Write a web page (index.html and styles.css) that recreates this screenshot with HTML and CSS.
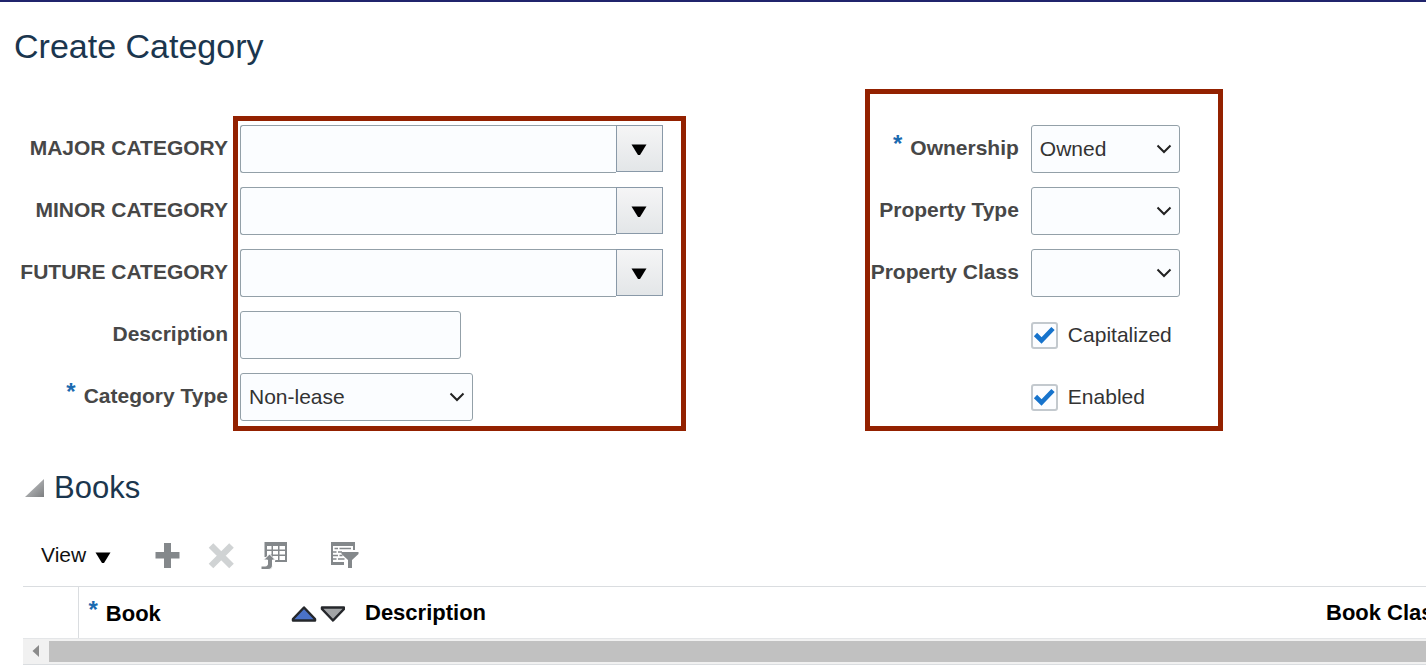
FILE: index.html
```
<!DOCTYPE html>
<html lang="en">
<head>
<meta charset="UTF-8">
<meta name="viewport" content="width=device-width, initial-scale=1">
<title>Create Category</title>
<link rel="stylesheet" href="styles.css">
</head>
<body>

<!-- shared icons -->
<svg class="sprite" aria-hidden="true">
  <symbol id="chevron" viewBox="0 0 16 10">
    <path d="M1.5 1.5 L8 8 L14.5 1.5" fill="none" stroke="#222" stroke-width="2"/>
  </symbol>
  <symbol id="caret" viewBox="0 0 16 12">
    <path d="M0.5 0.5 H15.5 L9 11 H7 Z" fill="#000"/>
  </symbol>
  <symbol id="check" viewBox="0 0 27 27">
    <path d="M4.5 12.5 L10.5 18.5 L22 6.5" fill="none" stroke="#1673cc" stroke-width="4.6"/>
  </symbol>
</svg>

<h1>Create Category</h1>

<form class="category-form">
  <div class="form-col form-left">
    <label for="major">MAJOR CATEGORY</label>
    <div class="combo">
      <input type="text" id="major">
      <button type="button" aria-label="Search major category"><svg><use href="#caret"/></svg></button>
    </div>

    <label for="minor">MINOR CATEGORY</label>
    <div class="combo">
      <input type="text" id="minor">
      <button type="button" aria-label="Search minor category"><svg><use href="#caret"/></svg></button>
    </div>

    <label for="future">FUTURE CATEGORY</label>
    <div class="combo">
      <input type="text" id="future">
      <button type="button" aria-label="Search future category"><svg><use href="#caret"/></svg></button>
    </div>

    <label for="description">Description</label>
    <input type="text" id="description" class="description">

    <label for="type"><span class="required">*</span>Category Type</label>
    <div class="select select-wide">
      <select id="type">
        <option>Non-lease</option>
        <option>Lease</option>
      </select>
      <svg><use href="#chevron"/></svg>
    </div>

    <div class="frame"></div>
  </div>

  <div class="form-col form-right">
    <label for="ownership"><span class="required">*</span>Ownership</label>
    <div class="select">
      <select id="ownership">
        <option>Owned</option>
        <option>Leased</option>
      </select>
      <svg><use href="#chevron"/></svg>
    </div>

    <label for="property-type">Property Type</label>
    <div class="select">
      <select id="property-type"><option></option></select>
      <svg><use href="#chevron"/></svg>
    </div>

    <label for="property-class">Property Class</label>
    <div class="select">
      <select id="property-class"><option></option></select>
      <svg><use href="#chevron"/></svg>
    </div>

    <div class="check">
      <span class="tick"><input type="checkbox" id="capitalized" checked><svg><use href="#check"/></svg></span>
      <label for="capitalized">Capitalized</label>
    </div>

    <div class="check">
      <span class="tick"><input type="checkbox" id="enabled" checked><svg><use href="#check"/></svg></span>
      <label for="enabled">Enabled</label>
    </div>

    <div class="frame"></div>
  </div>
</form>

<section class="books">
  <h2>
    <svg class="disclosure" viewBox="0 0 19 19" aria-hidden="true">
      <defs>
        <linearGradient id="fade" x1="0" y1="0" x2="1" y2="1">
          <stop offset="0.3" stop-color="#b4b6b8"/>
          <stop offset="1" stop-color="#7c7e80"/>
        </linearGradient>
      </defs>
      <path d="M19 0 V18 H0 Z" fill="url(#fade)"/>
    </svg>
    Books
  </h2>

  <div class="toolbar">
    <button type="button" class="view">View <svg><use href="#caret"/></svg></button>
    <button type="button" class="icon" aria-label="Add row">
      <svg viewBox="0 0 28 30"><path d="M11 3 h7 v9 h8.500 v6.500 h-8.500 v9.500 h-7 v-9.500 h-8.500 v-6.500 h8.500 Z" fill="#84888b"/></svg>
    </button>
    <button type="button" class="icon" aria-label="Delete row" disabled>
      <svg viewBox="0 0 28 30"><path d="M4 5.500 L24.500 26 M24.500 5.500 L4 26" stroke="#d0d3d4" stroke-width="6.500"/></svg>
    </button>
    <button type="button" class="icon" aria-label="Detach">
      <svg viewBox="0 0 28 30">
        <path d="M3.500 2 H26 V22 H14 V19.500 H9.500 V13 L6 13 V17 H3.500 Z" fill="#84888b"/>
        <path d="M6 6 h4.500 v3.500 h-4.500 Z M12 6 h5 v3.500 h-5 Z M18.500 6 h5.500 v3.500 h-5.500 Z M6 11 h4.500 v3.500 h-4.500 Z M12 11 h5 v3.500 h-5 Z M18.500 11 h5.500 v3.500 h-5.500 Z M12 16 h5 v4 h-5 Z M18.500 16 h5.500 v4 h-5.500 Z" fill="#fff"/>
        <path d="M8.500 14 L14.500 20 H11.500 V25 Q11.500 29.500 7 29.500 H0 V26 H4.500 Q6.500 26 6.500 24 V20 H2.500 Z" fill="#84888b" stroke="#fff" stroke-width="1"/>
      </svg>
    </button>
    <button type="button" class="icon icon-filter" aria-label="Query by example">
      <svg viewBox="0 0 28 30">
        <path d="M0 2 H24 V10 H22 V6 H2 V22 H13 V25 H0 Z" fill="#84888b"/>
        <path d="M3.500 8.500 H7 M8.500 8.500 H20 M2 12 H5.500 M7 12 H11 M2 15.500 H7 M8.500 15.500 H11.500 M2 19 H5.500 M7 19 H13.500" stroke="#84888b" stroke-width="1.500" fill="none"/>
        <path d="M10.500 12 H27.500 V14 L21 20 V28 H17 V20 L10.500 14 Z" fill="#84888b"/>
      </svg>
    </button>
  </div>

  <div class="table-wrap">
    <table>
      <thead>
        <tr>
          <th class="col-select"></th>
          <th class="col-book">
            <div class="sortable">
              <span><span class="required">*</span>Book</span>
              <svg class="sort" viewBox="0 0 54 18" aria-hidden="true">
                <path d="M13 3.500 L24 15 V16.500 H2 V15 Z" fill="#4a72c8" stroke="#25272b" stroke-width="2.500" stroke-linejoin="round"/>
                <path d="M31 3.500 H53 V5 L42 16.500 L31 5 Z" fill="#a2a4a6" stroke="#25272b" stroke-width="2.500" stroke-linejoin="round"/>
              </svg>
            </div>
          </th>
          <th class="col-description">Description</th>
          <th class="col-class">Book Class</th>
        </tr>
      </thead>
    </table>
  </div>
  <div class="scrollbar">
    <svg viewBox="0 0 26 21" aria-hidden="true"><path d="M16 4 V16 L9.500 10 Z" fill="#8b8b8b"/></svg>
    <div class="thumb"></div>
  </div>
</section>

</body>
</html>
```
FILE: styles.css
```
* {
  box-sizing: border-box;
}

body {
  margin: 0;
  border-top: 2px solid #20246c;
  background: #fff;
  color: #333;
  font-family: "Liberation Sans", Arial, Helvetica, sans-serif;
  font-size: 21px;
  overflow-x: hidden;
}

button,
input,
select {
  margin: 0;
  font: inherit;
  color: inherit;
}

.sprite {
  position: absolute;
  width: 0;
  height: 0;
}

h1,
h2 {
  margin: 0;
  color: #1b364e;
  font-weight: normal;
}

h1 {
  padding: 24px 14px 0;
  font-size: 34px;
  line-height: 40px;
}

/* Form */
.category-form {
  display: grid;
  grid-template-columns: 61% 39%;
  margin-top: 59px;
}

.form-col {
  position: relative;
  display: grid;
  grid-template-rows: repeat(5, 48px);
  row-gap: 14px;
  justify-content: start;
}

.form-left {
  grid-template-columns: 228px 423px;
  column-gap: 12px;
}

.form-right {
  grid-template-columns: 149px 149px;
  column-gap: 12px;
}

.form-col > label {
  padding-bottom: 2px;
  color: #474747;
  font-weight: bold;
  line-height: 46px;
  text-align: right;
  white-space: nowrap;
}

.required {
  margin-right: 8px;
  color: #1b6ab0;
  font-size: 24px;
  font-weight: bold;
  line-height: 24px;
  vertical-align: 3px;
}

input[type="text"],
select {
  height: 48px;
  padding: 0 8px 2px;
  border: 1px solid #93a0a8;
  border-radius: 3px;
  background: #fbfdff;
}

.combo {
  display: flex;
  align-items: flex-start;
}

.combo input {
  flex: 1;
  min-width: 0;
  border-right: 0;
  border-radius: 3px 0 0 3px;
}

.combo button {
  display: flex;
  align-items: center;
  justify-content: center;
  width: 47px;
  height: 47px;
  padding: 2px 2px 0 0;
  border: 1px solid #8999a8;
  background: linear-gradient(#f5f5f6, #e3e6e8);
}

.combo svg,
.view svg {
  width: 16px;
  height: 12px;
}

.description {
  width: 221px;
}

.select {
  position: relative;
}

.select-wide {
  width: 233px;
}

.select select {
  display: block;
  width: 100%;
  appearance: none;
}

.select svg {
  position: absolute;
  right: 8px;
  top: 19px;
  width: 16px;
  height: 10px;
  pointer-events: none;
}

.check {
  grid-column: 2;
  display: flex;
  align-items: center;
  gap: 10px;
}

.tick {
  position: relative;
  width: 27px;
  height: 27px;
}

.tick input {
  display: block;
  width: 27px;
  height: 27px;
  border: 2px solid #c3c9ce;
  border-radius: 3px;
  background: #fcfdff;
  appearance: none;
}

.tick svg {
  position: absolute;
  inset: 0;
  width: 27px;
  height: 27px;
  pointer-events: none;
  visibility: hidden;
}

.tick input:checked + svg {
  visibility: visible;
}

/* red outline laid over the fields to fill in */
.frame {
  position: absolute;
  grid-row: 1 / 6;
  border: 5px solid #932100;
  pointer-events: none;
}

.form-left .frame {
  grid-column: 2 / 3;
  inset: -9px -23px -10px -7px;
}

.form-right .frame {
  grid-column: 1 / 3;
  inset: -36px -43px -10px -5px;
}

/* Books */
.books {
  margin-top: 49px;
  padding-left: 23px;
}

h2 {
  display: flex;
  align-items: center;
  gap: 10px;
  font-size: 31px;
  line-height: 36px;
}

.disclosure {
  width: 19px;
  height: 19px;
  margin-left: 2px;
}

.toolbar {
  display: flex;
  align-items: center;
  height: 30px;
  margin: 34px 0 16px;
  padding-left: 18px;
}

.toolbar button {
  padding: 0;
  border: 0;
  background: none;
}

.toolbar .view {
  display: flex;
  align-items: center;
  gap: 9px;
  margin-right: 42px;
  color: #111;
  line-height: 28px;
}

.view svg {
  margin-top: 6px;
}

.icon {
  width: 28px;
  height: 30px;
  margin-right: 26px;
}

.icon svg {
  display: block;
  width: 28px;
  height: 30px;
}

.icon-filter {
  margin-left: 16px;
}

.table-wrap {
  overflow: hidden;
  border-top: 1px solid #dadde0;
}

table {
  width: 1593px;
  border-collapse: collapse;
  table-layout: fixed;
}

th {
  height: 51px;
  padding: 0 10px;
  color: #000;
  font-size: 22px;
  line-height: 28px;
  text-align: left;
}

.col-select {
  width: 55px;
  border-right: 1px solid #dadde0;
}

.col-book {
  width: 277px;
}

.col-description {
  width: 961px;
}

.col-class {
  width: 300px;
}

.sortable {
  display: flex;
  align-items: center;
  justify-content: space-between;
}

.sort {
  width: 54px;
  height: 18px;
}

.scrollbar {
  display: flex;
  height: 27px;
  padding: 2px 0;
  border-top: 1px solid #e4e6e8;
  border-bottom: 1px solid #dadde0;
  background: #f1f1f1;
}

.scrollbar svg {
  width: 26px;
  height: 21px;
}

.thumb {
  flex: 1;
  background: #c1c1c1;
}
```
